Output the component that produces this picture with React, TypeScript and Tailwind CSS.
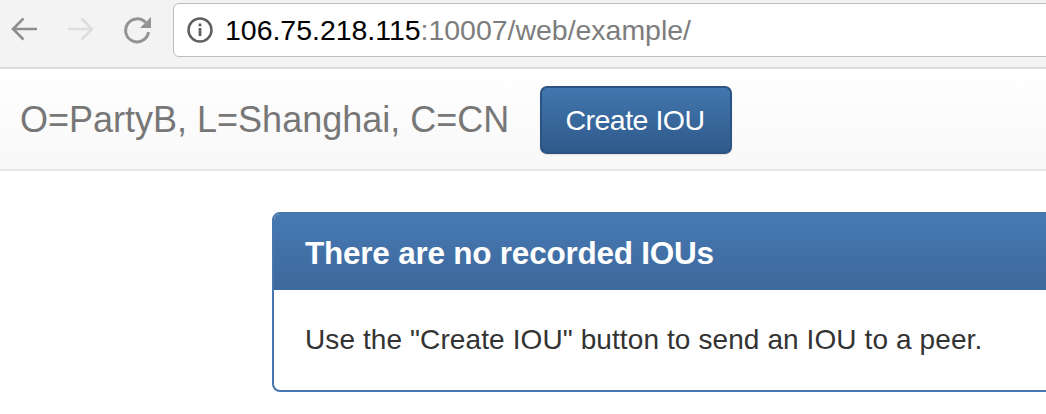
export default function App() {
  const font = "font-['Liberation_Sans',Arial,sans-serif]";
  return (
    <div className={`w-[1046px] h-[414px] overflow-hidden bg-white ${font}`}>
      <div className="h-[69px] bg-[#f3f3f3] border-b-2 border-[#dcdcdc] flex items-start">
        <div className="h-[67px] flex items-center">
          <svg className="ml-[9px] mb-[9px]" width="30" height="30" viewBox="0 0 30 30" fill="none" stroke="#8e8e8e" strokeWidth="2.6">
            <path d="M28 15H4M14.500 4.500 4 15l10.500 10.500" />
          </svg>
          <svg className="ml-[27px] mb-[9px]" width="30" height="30" viewBox="0 0 30 30" fill="none" stroke="#dddddd" strokeWidth="2.6">
            <path d="M2 15h24M15.500 4.500 26 15 15.500 25.500" />
          </svg>
          <svg className="ml-[27px] mb-[8px]" width="30" height="30" viewBox="0 0 30 30" fill="none">
            <path d="M22.500 7.500A11.500 11.500 0 1 0 25.500 17" stroke="#949494" strokeWidth="3" />
            <path d="M28 2v11H17z" fill="#949494" />
          </svg>
        </div>
        <div className="ml-[20px] mt-[3px] h-[54px] w-[900px] shrink-0 bg-white border border-[#bdbdbd] rounded-[6px] flex items-center pl-[12px]">
          <svg width="28" height="28" viewBox="0 0 28 28" fill="none">
            <circle cx="14" cy="14" r="11.500" stroke="#5f5f5f" strokeWidth="2.500" />
            <rect x="12.600" y="12" width="2.800" height="8" fill="#5f5f5f" />
            <rect x="12.600" y="7.500" width="2.800" height="2.800" fill="#5f5f5f" />
          </svg>
          <span className="ml-[11px] text-[28.500px] tracking-[-0.03px] text-black whitespace-nowrap">
            106.75.218.115<span className="text-[#7d7d7d]">:10007/web/example/</span>
          </span>
        </div>
      </div>
      <div className="h-[102px] bg-gradient-to-b from-white to-[#f8f8f8] border-b-2 border-[#e7e7e7] flex items-center pl-[20px]">
        <span className="w-[489px] shrink-0 text-[36px] text-[#777777] whitespace-nowrap mt-[1px]">O=PartyB, L=Shanghai, C=CN</span>
        <button className="ml-[31px] w-[192px] h-[68px] rounded-[7px] border-2 border-[#2b5484] bg-gradient-to-b from-[#4276ad] to-[#2f5a8c] text-white text-[28.500px] tracking-[-0.5px] shadow-[0_1px_2px_rgba(0,0,0,0.1)] mt-[2px] pr-[2px]">
          Create IOU
        </button>
      </div>
      <div className="mt-[41px] ml-[272px] w-[900px] h-[180px] rounded-[8px] border-2 border-[#4676ad] bg-white overflow-hidden">
        <div className="h-[76px] bg-gradient-to-b from-[#4679b2] to-[#3d689c] flex items-center pl-[31px] pt-[4px]">
          <span className="text-[31.500px] font-bold text-white tracking-[-0.23px] whitespace-nowrap">There are no recorded IOUs</span>
        </div>
        <div className="h-[100px] flex items-center pl-[31px]">
          <span className="text-[28px] text-[#333333] tracking-[0.1px] whitespace-nowrap">Use the "Create IOU" button to send an IOU to a peer.</span>
        </div>
      </div>
    </div>
  );
}
